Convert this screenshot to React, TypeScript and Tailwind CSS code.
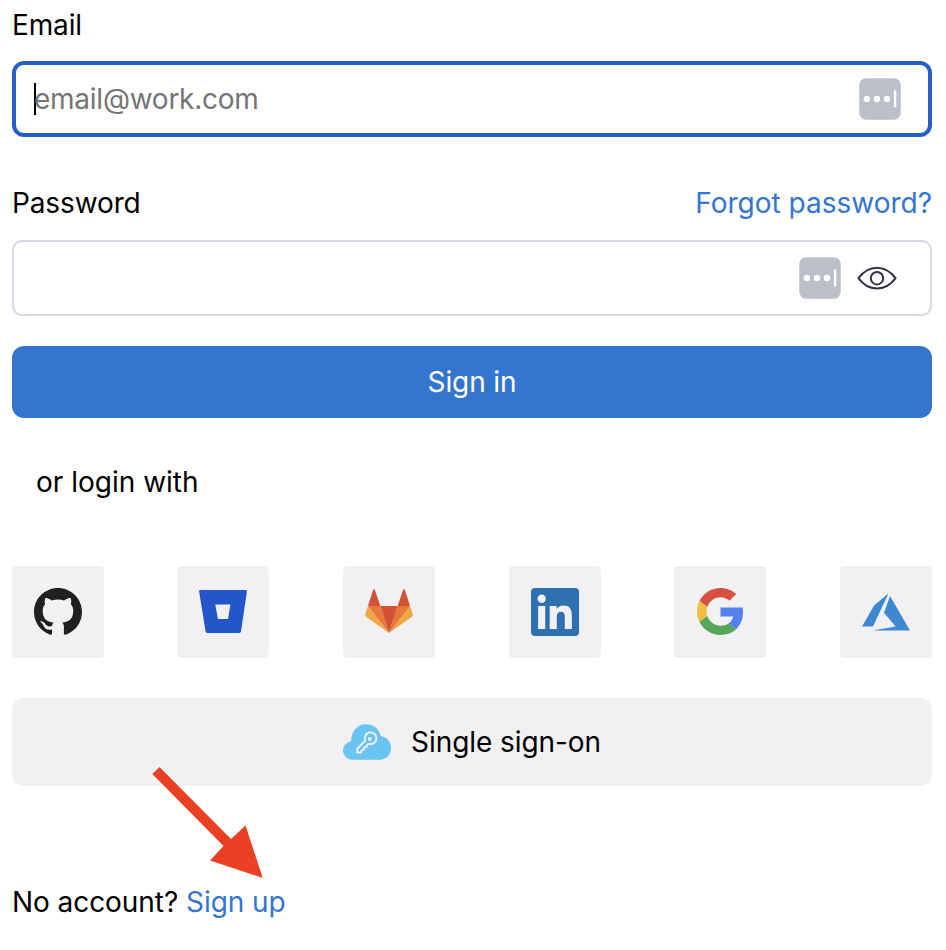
import React from 'react';

function AutofillBadge() {
  return (
    <svg className="block h-[42px] w-[42px] shrink-0" viewBox="0 0 42 42" aria-hidden="true">
      <rect x="0.25" y="0.25" width="41.5" height="41.5" rx="7" fill="#bbbfc9" />
      <circle cx="7.8" cy="21" r="3.2" fill="#fff" />
      <circle cx="17.9" cy="21" r="3.2" fill="#fff" />
      <circle cx="28" cy="21" r="3.2" fill="#fff" />
      <rect x="34.9" y="12.3" width="2.4" height="17.2" rx="1" fill="#fff" />
    </svg>
  );
}

function EyeIcon() {
  return (
    <svg className="block h-6 w-10" viewBox="0 0 40 24" fill="none" stroke="#343142" strokeWidth="2" strokeLinejoin="round">
      <path d="M1.400 12.200C6.500 5.200 12.800 1.700 20 1.700S33.500 5.200 38.600 12.200C33.500 19.200 27.200 22.600 20 22.600S6.500 19.200 1.400 12.200Z" />
      <circle cx="20" cy="12.2" r="6.2" />
    </svg>
  );
}

function GithubLogo() {
  return (
    <svg className="block size-12" viewBox="0 0.297 24 24" fill="#221f20">
      <path d="M12 .297c-6.63 0-12 5.373-12 12 0 5.303 3.438 9.8 8.205 11.385.6.113.82-.258.82-.577 0-.285-.01-1.04-.015-2.04-3.338.724-4.042-1.61-4.042-1.61C4.422 18.07 3.633 17.7 3.633 17.7c-1.087-.744.084-.729.084-.729 1.205.084 1.838 1.236 1.838 1.236 1.07 1.835 2.809 1.305 3.495.998.108-.776.417-1.305.76-1.605-2.665-.3-5.466-1.332-5.466-5.93 0-1.31.465-2.38 1.235-3.22-.135-.303-.54-1.523.105-3.176 0 0 1.005-.322 3.3 1.23.96-.267 1.98-.399 3-.405 1.02.006 2.04.138 3 .405 2.28-1.552 3.285-1.23 3.285-1.23.645 1.653.24 2.873.12 3.176.765.84 1.23 1.91 1.23 3.22 0 4.61-2.805 5.625-5.475 5.92.42.36.81 1.096.81 2.22 0 1.606-.015 2.896-.015 3.286 0 .315.21.69.825.57C20.565 22.092 24 17.592 24 12.297c0-6.627-5.373-12-12-12" />
    </svg>
  );
}

function BitbucketLogo() {
  return (
    <svg className="block size-12" viewBox="0 0 48 48">
      <path fill="#2456c9" fillRule="evenodd" d="M1.3 2H46.7Q48.1 2 47.9 3.5L42 43.6Q41.8 45 40.4 45H8.2Q6.8 45 6.6 43.6L.1 3.500Q-.1 2 1.3 2ZM16.3 16.400L19 31H29L31.400 16.400Z" />
    </svg>
  );
}

function GitlabLogo() {
  return (
    <svg className="block size-12" viewBox="0 0 48 48">
      <path fill="#f0a847" d="M3 18L.2 26.2Q-.2 27.8 1 28.7L24 45ZM45 18l2.8 8.2q.4 1.6-.8 2.5L24 45Z" />
      <path fill="#ea763b" d="M3 18H15.4L24 45ZM45 18H32.6L24 45Z" />
      <path fill="#d35135" d="M15.4 18H32.6L24 45ZM3 18L8.2 1.8Q9 .3 9.8 1.8L15.4 18ZM45 18L39.8 1.8Q39 .3 38.2 1.8L32.6 18Z" />
    </svg>
  );
}

function LinkedinLogo() {
  return (
    <svg className="block size-12" viewBox="0 0 24 24" fill="#2f70ae">
      <path d="M20.447 20.452h-3.554v-5.569c0-1.328-.027-3.037-1.852-3.037-1.853 0-2.136 1.445-2.136 2.939v5.667H9.351V9h3.414v1.561h.046c.477-.9 1.637-1.85 3.37-1.85 3.601 0 4.267 2.37 4.267 5.455v6.286zM5.337 7.433a2.062 2.062 0 01-2.063-2.065 2.064 2.064 0 112.063 2.065zm1.782 13.019H3.555V9h3.564v11.452zM22.225 0H1.771C.792 0 0 .774 0 1.729v20.542C0 23.227.792 24 1.771 24h20.451C23.2 24 24 23.227 24 22.271V1.729C24 .774 23.2 0 22.222 0h.003z" />
    </svg>
  );
}

function GoogleLogo() {
  return (
    <svg className="block size-12" viewBox="-1 0 49 49">
      <path fill="#d85140" d="M24 9.5c3.54 0 6.71 1.22 9.21 3.6l6.85-6.85C35.9 2.38 30.47 0 24 0 14.62 0 6.51 5.38 2.56 13.22l7.98 6.19C12.43 13.72 17.74 9.5 24 9.5z" />
      <path fill="#5383ec" d="M46.98 24.55c0-1.57-.15-3.09-.38-4.55H24v9.02h12.94c-.58 2.96-2.26 5.48-4.78 7.18l7.73 6c4.51-4.18 7.09-10.36 7.09-17.65z" />
      <path fill="#f1be42" d="M10.53 28.59c-.48-1.45-.76-2.99-.76-4.59s.27-3.14.76-4.59l-7.98-6.19C.92 16.46 0 20.12 0 24c0 3.88.92 7.54 2.56 10.78l7.97-6.19z" />
      <path fill="#58a55c" d="M24 48c6.48 0 11.93-2.13 15.89-5.81l-7.73-6c-2.15 1.45-4.92 2.3-8.16 2.3-6.26 0-11.57-4.22-13.47-9.91l-7.98 6.19C6.51 42.62 14.62 48 24 48z" />
    </svg>
  );
}

function AzureLogo() {
  return (
    <svg className="block size-12" viewBox="0 0 24 24" fill="#3e88d2">
      <path d="M5.483 21.3H24L14.025 4.013l-3.038 8.347 5.836 6.938L5.483 21.3zM13.23 2.7L6.105 8.677 0 19.253h5.505v.014L13.23 2.7z" />
    </svg>
  );
}

function CloudKeyIcon() {
  return (
    <svg className="block h-9 w-12" viewBox="0 0 48 36">
      <path fill="#69c4f2" d="M9 35.700A9 9 0 0 1 0 26.700C0 22 3.400 18.200 8.200 17.600C8 8 14 .3 23 .3C30.500 .3 36.300 5 37.800 12.200C43.500 12.600 48 17.500 48 24C48 31 43 35.700 36.500 35.700Z" />
      <g fill="none" stroke="#f1f1f3" strokeWidth="1.9" strokeLinejoin="round">
        <path d="M22.200 16.300A5.800 5.800 0 1 1 26.500 19.900L24.700 20.400L23.600 22.800L21.400 23.300L20.700 25.700L18.700 26.100L18.200 28.500H14.200V25Z" />
      </g>
      <circle cx="26.800" cy="15" r="1.900" fill="#f1f1f3" />
    </svg>
  );
}

const providers = [
  { name: 'GitHub', Logo: GithubLogo },
  { name: 'Bitbucket', Logo: BitbucketLogo },
  { name: 'GitLab', Logo: GitlabLogo },
  { name: 'LinkedIn', Logo: LinkedinLogo },
  { name: 'Google', Logo: GoogleLogo },
  { name: 'Azure', Logo: AzureLogo },
];

export default function App() {
  return (
    <main className="relative h-[950px] w-[946px] overflow-hidden bg-white pl-3 pr-3.5 pt-[5px] font-['Inter',sans-serif] text-[28px] leading-10 text-black">
      <div className="tracking-[-0.15px]">Email</div>
      <div className="mt-4 flex h-[76px] items-center rounded-xl border-4 border-[#255fc7] pl-[18px] pr-[27px]">
        <span className="h-8 w-0.5 bg-black" />
        <span className="-ml-0.5 flex-1 tracking-[-0.25px] text-[#757575]">email@work.com</span>
        <AutofillBadge />
      </div>
      <div className="mt-[46px] flex justify-between">
        <span className="tracking-[-0.12px]">Password</span>
        <a className="text-[#3475cf]">Forgot password?</a>
      </div>
      <div className="mt-[17px] flex h-[76px] items-center justify-end gap-4 rounded-[10px] border-2 border-[#d9d7e6] pr-[33px]">
        <AutofillBadge />
        <EyeIcon />
      </div>
      <button className="mt-[30px] flex h-[72px] w-full items-center justify-center rounded-xl bg-[#3475cf] tracking-[-0.1px] text-white">
        Sign in
      </button>
      <div className="mt-11 pl-6">or login with</div>
      <div className="mt-16 grid grid-cols-[165px_166px_166px_165px_166px_92px]">
        {providers.map(({ name, Logo }) => (
          <button key={name} aria-label={name} className="flex size-[92px] items-center justify-center rounded bg-[#f1f1f3]">
            <Logo />
          </button>
        ))}
      </div>
      <button className="mt-10 flex h-[88px] w-full items-center justify-center gap-5 rounded-xl bg-[#f1f1f3] tracking-[-0.08px]">
        <CloudKeyIcon />
        <span>Single sign-on</span>
      </button>
      <div className="mt-24 tracking-[-0.06px]">
        No account? <a className="text-[#3475cf]">Sign up</a>
      </div>
      <svg className="absolute left-[150px] top-[765px] h-[115px] w-[115px]" viewBox="150 765 115 115" fill="#ea4025">
        <path d="M152.300 774L159.500 767L231 839L245.500 825.500L262.800 878L210 860.500L223.500 846Z" />
      </svg>
    </main>
  );
}
